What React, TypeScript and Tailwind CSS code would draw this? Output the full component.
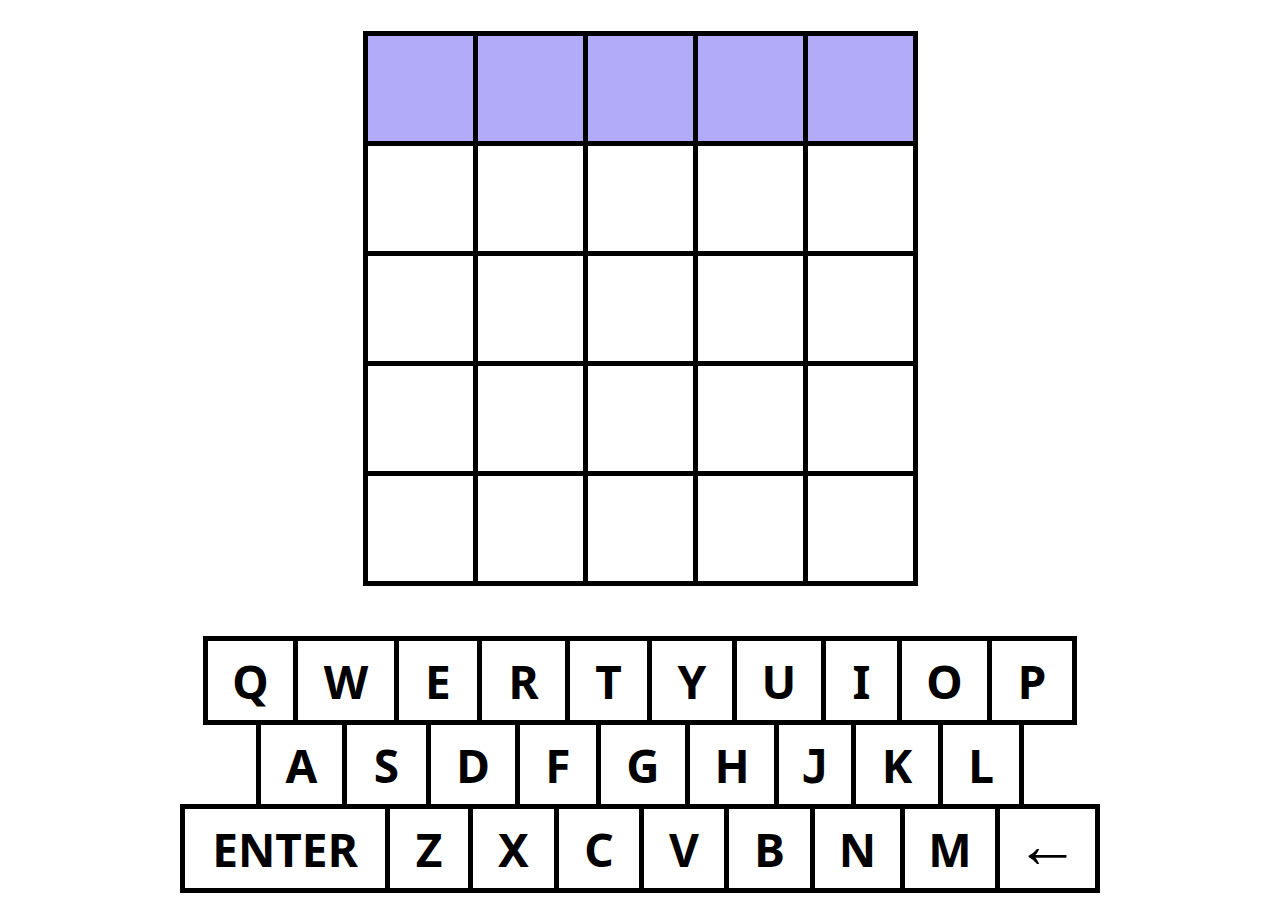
import { useEffect, useState } from "react";
import clsx from "clsx";

type Key = { label: string; width: string; font?: string };

const ROWS = 5;
const COLUMNS = 5;

const KEYBOARD: Key[][] = [
  [
    { label: "Q", width: "w-[95px]" },
    { label: "W", width: "w-[106px]" },
    { label: "E", width: "w-[88px]" },
    { label: "R", width: "w-[93px]" },
    { label: "T", width: "w-[87px]" },
    { label: "Y", width: "w-[90px]" },
    { label: "U", width: "w-[94px]" },
    { label: "I", width: "w-[81px]" },
    { label: "O", width: "w-[95px]" },
    { label: "P", width: "w-[90px]" },
  ],
  [
    { label: "A", width: "w-[91px]" },
    { label: "S", width: "w-[89px]" },
    { label: "D", width: "w-[94px]" },
    { label: "F", width: "w-[86px]" },
    { label: "G", width: "w-[94px]" },
    { label: "H", width: "w-[94px]" },
    { label: "J", width: "w-[82px]", font: "font-['DejaVu_Sans_Mono',monospace]" },
    { label: "K", width: "w-[92px]" },
    { label: "L", width: "w-[86px]" },
  ],
  [
    { label: "ENTER", width: "w-[210px]" },
    { label: "Z", width: "w-[88px]" },
    { label: "X", width: "w-[91px]" },
    { label: "C", width: "w-[90px]" },
    { label: "V", width: "w-[90px]" },
    { label: "B", width: "w-[91px]" },
    { label: "N", width: "w-[95px]" },
    { label: "M", width: "w-[100px]" },
    { label: "←", width: "w-[105px]", font: "font-['Liberation_Serif',serif] text-[64px] font-normal" },
  ],
];

function Board({ guesses, current }: { guesses: string[]; current: number }) {
  return (
    <section className="flex flex-col pt-[5px] pl-[5px]">
      {guesses.map((guess, row) => (
        <div key={row} className="flex">
          {Array.from({ length: COLUMNS }, (_, column) => (
            <div
              key={column}
              className={clsx(
                "-mt-[5px] -ml-[5px] flex size-[115px] items-center justify-center border-[5px] border-black text-[64px]",
                row === current ? "bg-[#b2abfa]" : "bg-white",
              )}
            >
              {guess[column]}
            </div>
          ))}
        </div>
      ))}
    </section>
  );
}

function Keyboard({ onPress }: { onPress: (label: string) => void }) {
  return (
    <section className="flex flex-col items-center pt-[5px]">
      {KEYBOARD.map((keys, row) => (
        <div key={row} className="-mt-[5px] flex pl-[5px]">
          {keys.map(({ label, width, font }) => (
            <button
              key={label}
              type="button"
              onClick={() => onPress(label)}
              className={clsx(
                "-ml-[5px] flex h-[89px] shrink-0 cursor-pointer items-center justify-center border-[5px] border-black bg-white pt-px",
                width,
              )}
            >
              {/* The outer line box keeps every glyph on the same baseline. */}
              <span className="block leading-[46px]">
                <span className={clsx("leading-[0px]", font)}>{label}</span>
              </span>
            </button>
          ))}
        </div>
      ))}
    </section>
  );
}

export default function App() {
  const [guesses, setGuesses] = useState<string[]>(Array(ROWS).fill(""));
  const [current, setCurrent] = useState(0);

  const press = (label: string) => {
    const guess = guesses[current];
    if (guess === undefined) return;
    if (label === "ENTER") {
      if (guess.length === COLUMNS) setCurrent(current + 1);
      return;
    }
    const next = label === "←" ? guess.slice(0, -1) : (guess + label).slice(0, COLUMNS);
    setGuesses(guesses.map((value, row) => (row === current ? next : value)));
  };

  useEffect(() => {
    const onKeyDown = (event: KeyboardEvent) => {
      if (event.key === "Enter") press("ENTER");
      else if (event.key === "Backspace") press("←");
      else if (/^[a-z]$/i.test(event.key)) press(event.key.toUpperCase());
    };
    window.addEventListener("keydown", onKeyDown);
    return () => window.removeEventListener("keydown", onKeyDown);
  });

  return (
    <main className="flex flex-col items-center gap-[50px] bg-white pt-[31px] pl-[11px] font-['Noto_Sans',sans-serif] text-[46px] leading-none font-bold text-black">
      <Board guesses={guesses} current={current} />
      <Keyboard onPress={press} />
    </main>
  );
}
